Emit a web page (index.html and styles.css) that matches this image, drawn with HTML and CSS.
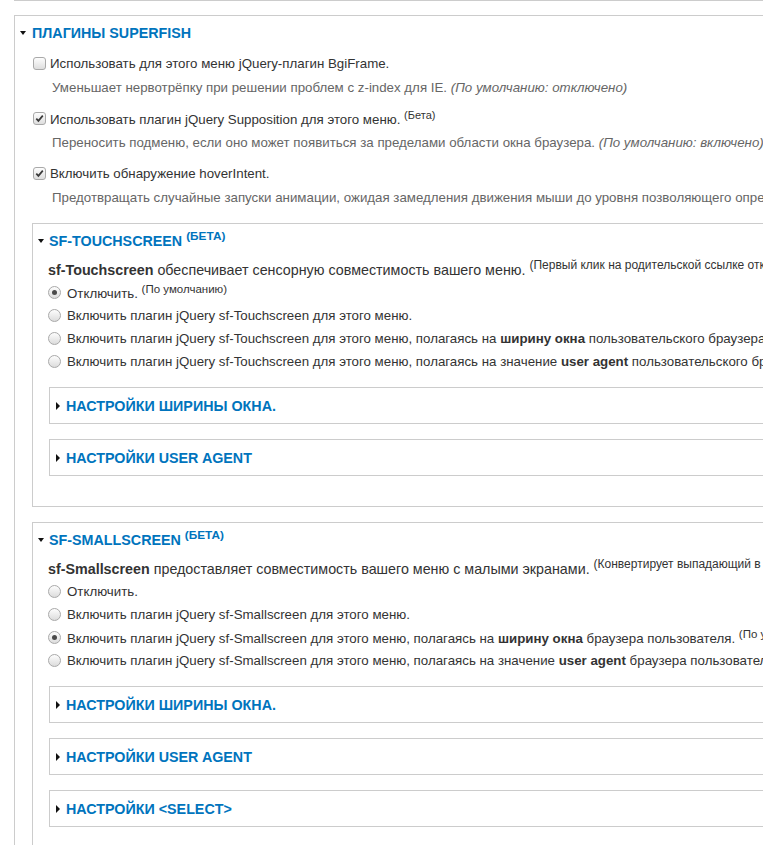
FILE: index.html
```html
<!DOCTYPE html>
<html lang="ru">
<head>
<meta charset="utf-8">
<title>Плагины Superfish</title>
<link rel="stylesheet" href="styles.css">
</head>
<body>
<div class="page">
  <div class="prev-bottom"></div>

  <section class="box box-outer">
    <div class="legend"><span class="tri-down"></span><span class="legend-text">ПЛАГИНЫ SUPERFISH</span></div>
    <div class="outer-content">
      <div class="form-item">
        <label class="option"><span class="cb"></span><span class="txt">Использовать для этого меню jQuery-плагин BgiFrame.</span></label>
        <div class="description">Уменьшает нервотрёпку при решении проблем с z-index для IE. <em>(По умолчанию: отключено)</em></div>
      </div>
      <div class="form-item">
        <label class="option"><span class="cb checked"><svg viewBox="0 0 13 13" width="13" height="13"><path d="M3.3 6.6 L5.4 8.9 L9.8 3.6" fill="none" stroke="#3a3a3a" stroke-width="1.7"/></svg></span><span class="txt">Использовать плагин jQuery Supposition для этого меню. <sup class="s-beta">(Бета)</sup></span></label>
        <div class="description">Переносить подменю, если оно может появиться за пределами области окна браузера. <em>(По умолчанию: включено)</em></div>
      </div>
      <div class="form-item">
        <label class="option"><span class="cb checked"><svg viewBox="0 0 13 13" width="13" height="13"><path d="M3.3 6.6 L5.4 8.9 L9.8 3.6" fill="none" stroke="#3a3a3a" stroke-width="1.7"/></svg></span><span class="txt">Включить обнаружение hoverIntent.</span></label>
        <div class="description">Предотвращать случайные запуски анимации, ожидая замедления движения мыши до уровня позволяющего определить намерение пользователя.</div>
      </div>

      <section class="box box-inner">
        <div class="legend"><span class="tri-down"></span><span class="legend-text">SF-TOUCHSCREEN <sup class="legend-sup">(БЕТА)</sup></span></div>
        <div class="inner-content">
          <div class="intro"><strong>sf-Touchscreen</strong> обеспечивает сенсорную совместимость вашего меню. <sup>(Первый клик на родительской ссылке откроет подменю, второй клик перейдёт по ссылке.)</sup></div>
          <div class="radio"><span class="rb checked"></span><span class="txt">Отключить. <sup>(По умолчанию)</sup></span></div>
          <div class="radio"><span class="rb"></span><span class="txt">Включить плагин jQuery sf-Touchscreen для этого меню.</span></div>
          <div class="radio"><span class="rb"></span><span class="txt">Включить плагин jQuery sf-Touchscreen для этого меню, полагаясь на <strong>ширину окна</strong> пользовательского браузера.</span></div>
          <div class="radio"><span class="rb"></span><span class="txt">Включить плагин jQuery sf-Touchscreen для этого меню, полагаясь на значение <strong>user agent</strong> пользовательского браузера.</span></div>

          <section class="box box-nested first">
            <div class="legend"><span class="tri-right"></span><span class="legend-text">НАСТРОЙКИ ШИРИНЫ ОКНА.</span></div>
          </section>
          <section class="box box-nested">
            <div class="legend"><span class="tri-right"></span><span class="legend-text">НАСТРОЙКИ USER AGENT</span></div>
          </section>
        </div>
      </section>

      <section class="box box-inner box-open">
        <div class="legend"><span class="tri-down"></span><span class="legend-text">SF-SMALLSCREEN <sup class="legend-sup">(БЕТА)</sup></span></div>
        <div class="inner-content">
          <div class="intro"><strong>sf-Smallscreen</strong> предоставляет совместимость вашего меню с малыми экранами. <sup>(Конвертирует выпадающий в список.)</sup></div>
          <div class="radio"><span class="rb"></span><span class="txt">Отключить.</span></div>
          <div class="radio"><span class="rb"></span><span class="txt">Включить плагин jQuery sf-Smallscreen для этого меню.</span></div>
          <div class="radio"><span class="rb checked"></span><span class="txt">Включить плагин jQuery sf-Smallscreen для этого меню, полагаясь на <strong>ширину окна</strong> браузера пользователя. <sup>(По умолчанию)</sup></span></div>
          <div class="radio"><span class="rb"></span><span class="txt">Включить плагин jQuery sf-Smallscreen для этого меню, полагаясь на значение <strong>user agent</strong> браузера пользователя.</span></div>

          <section class="box box-nested first">
            <div class="legend"><span class="tri-right"></span><span class="legend-text">НАСТРОЙКИ ШИРИНЫ ОКНА.</span></div>
          </section>
          <section class="box box-nested">
            <div class="legend"><span class="tri-right"></span><span class="legend-text">НАСТРОЙКИ USER AGENT</span></div>
          </section>
          <section class="box box-nested">
            <div class="legend"><span class="tri-right"></span><span class="legend-text">НАСТРОЙКИ &lt;SELECT&gt;</span></div>
          </section>
        </div>
      </section>
    </div>
  </section>
</div>
</body>
</html>
```

FILE: styles.css
```css
html, body {
  margin: 0;
  padding: 0;
  background: #fff;
}

body {
  width: 763px;
  height: 845px;
  overflow: hidden;
  font-family: "Liberation Sans", Arial, sans-serif;
  font-size: 13.3px;
  color: #333;
}

.page {
  width: 1200px;
}

/* bottom edge of the preceding fieldset */
.prev-bottom {
  margin-left: 14px;
  border-top: 1px solid #ccc;
  height: 0;
}

.box {
  border: 1px solid #ccc;
  white-space: nowrap;
}

.box-outer {
  margin: 14px 0 0 14px;
  padding-top: 7px;
  border-bottom: none;
  height: 900px;
}

.legend {
  display: flex;
  align-items: center;
  height: 20px;
  line-height: 20px;
  padding-left: 5px;
}

.legend-text {
  font-weight: bold;
  font-size: 14.3px;
  color: #0074bd;
}

.legend-sup {
  font-weight: bold;
  font-size: 11.8px;
  line-height: 10px;
  vertical-align: 6px;
}

.tri-down {
  width: 0;
  height: 0;
  border-left: 3px solid transparent;
  border-right: 3px solid transparent;
  border-top: 4px solid #111;
  margin-right: 6px;
}

.tri-right {
  width: 0;
  height: 0;
  border-top: 4px solid transparent;
  border-bottom: 4px solid transparent;
  border-left: 4px solid #111;
  margin-right: 6px;
}

.outer-content {
  margin-top: 10px;
  padding-left: 18px;
  display: flex;
  flex-direction: column;
  gap: 10px;
}

.form-item {
  display: flex;
  flex-direction: column;
}

.option {
  display: flex;
  align-items: center;
  height: 20px;
}

.description {
  margin-top: 5px;
  padding-left: 19px;
  height: 20px;
  line-height: 20px;
  font-size: 13.3px;
  color: #666;
}

sup {
  font-size: 11.5px;
  line-height: 10px;
  vertical-align: 5px;
}

.s-beta {
  font-size: 11px;
}

/* checkbox */
.cb {
  flex: none;
  box-sizing: border-box;
  width: 13px;
  height: 13px;
  margin-right: 4px;
  border: 1px solid #a9a9a9;
  border-radius: 3px;
  background: linear-gradient(#fdfdfd, #dedede);
  display: inline-flex;
  position: relative;
}

.cb svg {
  position: absolute;
  left: -1px;
  top: -1px;
}

/* radio */
.rb {
  flex: none;
  box-sizing: border-box;
  width: 13px;
  height: 13px;
  margin-right: 6px;
  border: 1px solid #a9a9a9;
  border-radius: 50%;
  background: linear-gradient(#fdfdfd, #dcdcdc);
  display: inline-flex;
  align-items: center;
  justify-content: center;
}

.rb.checked::after {
  content: "";
  width: 5px;
  height: 5px;
  border-radius: 50%;
  background: #4a4a4a;
}

.box-inner {
  margin-top: 5px;
  margin-left: -1px;
  padding-top: 7px;
  padding-bottom: 30px;
}

.box-inner .tri-down {
  margin-right: 5px;
}

.box-open {
  border-bottom: none;
  height: 400px;
}

.inner-content {
  margin-top: 8px;
  padding-left: 15px;
}

.intro {
  height: 22px;
  line-height: 22px;
  font-size: 14.3px;
}

.intro sup {
  font-size: 12px;
  vertical-align: 6px;
}

.radio {
  display: flex;
  align-items: center;
  height: 23px;
}

.box-nested {
  margin-top: 15px;
  margin-left: 1px;
}

.box-nested.first {
  margin-top: 14px;
}

.box-nested .legend {
  height: 35px;
  padding-left: 6px;
}
```
